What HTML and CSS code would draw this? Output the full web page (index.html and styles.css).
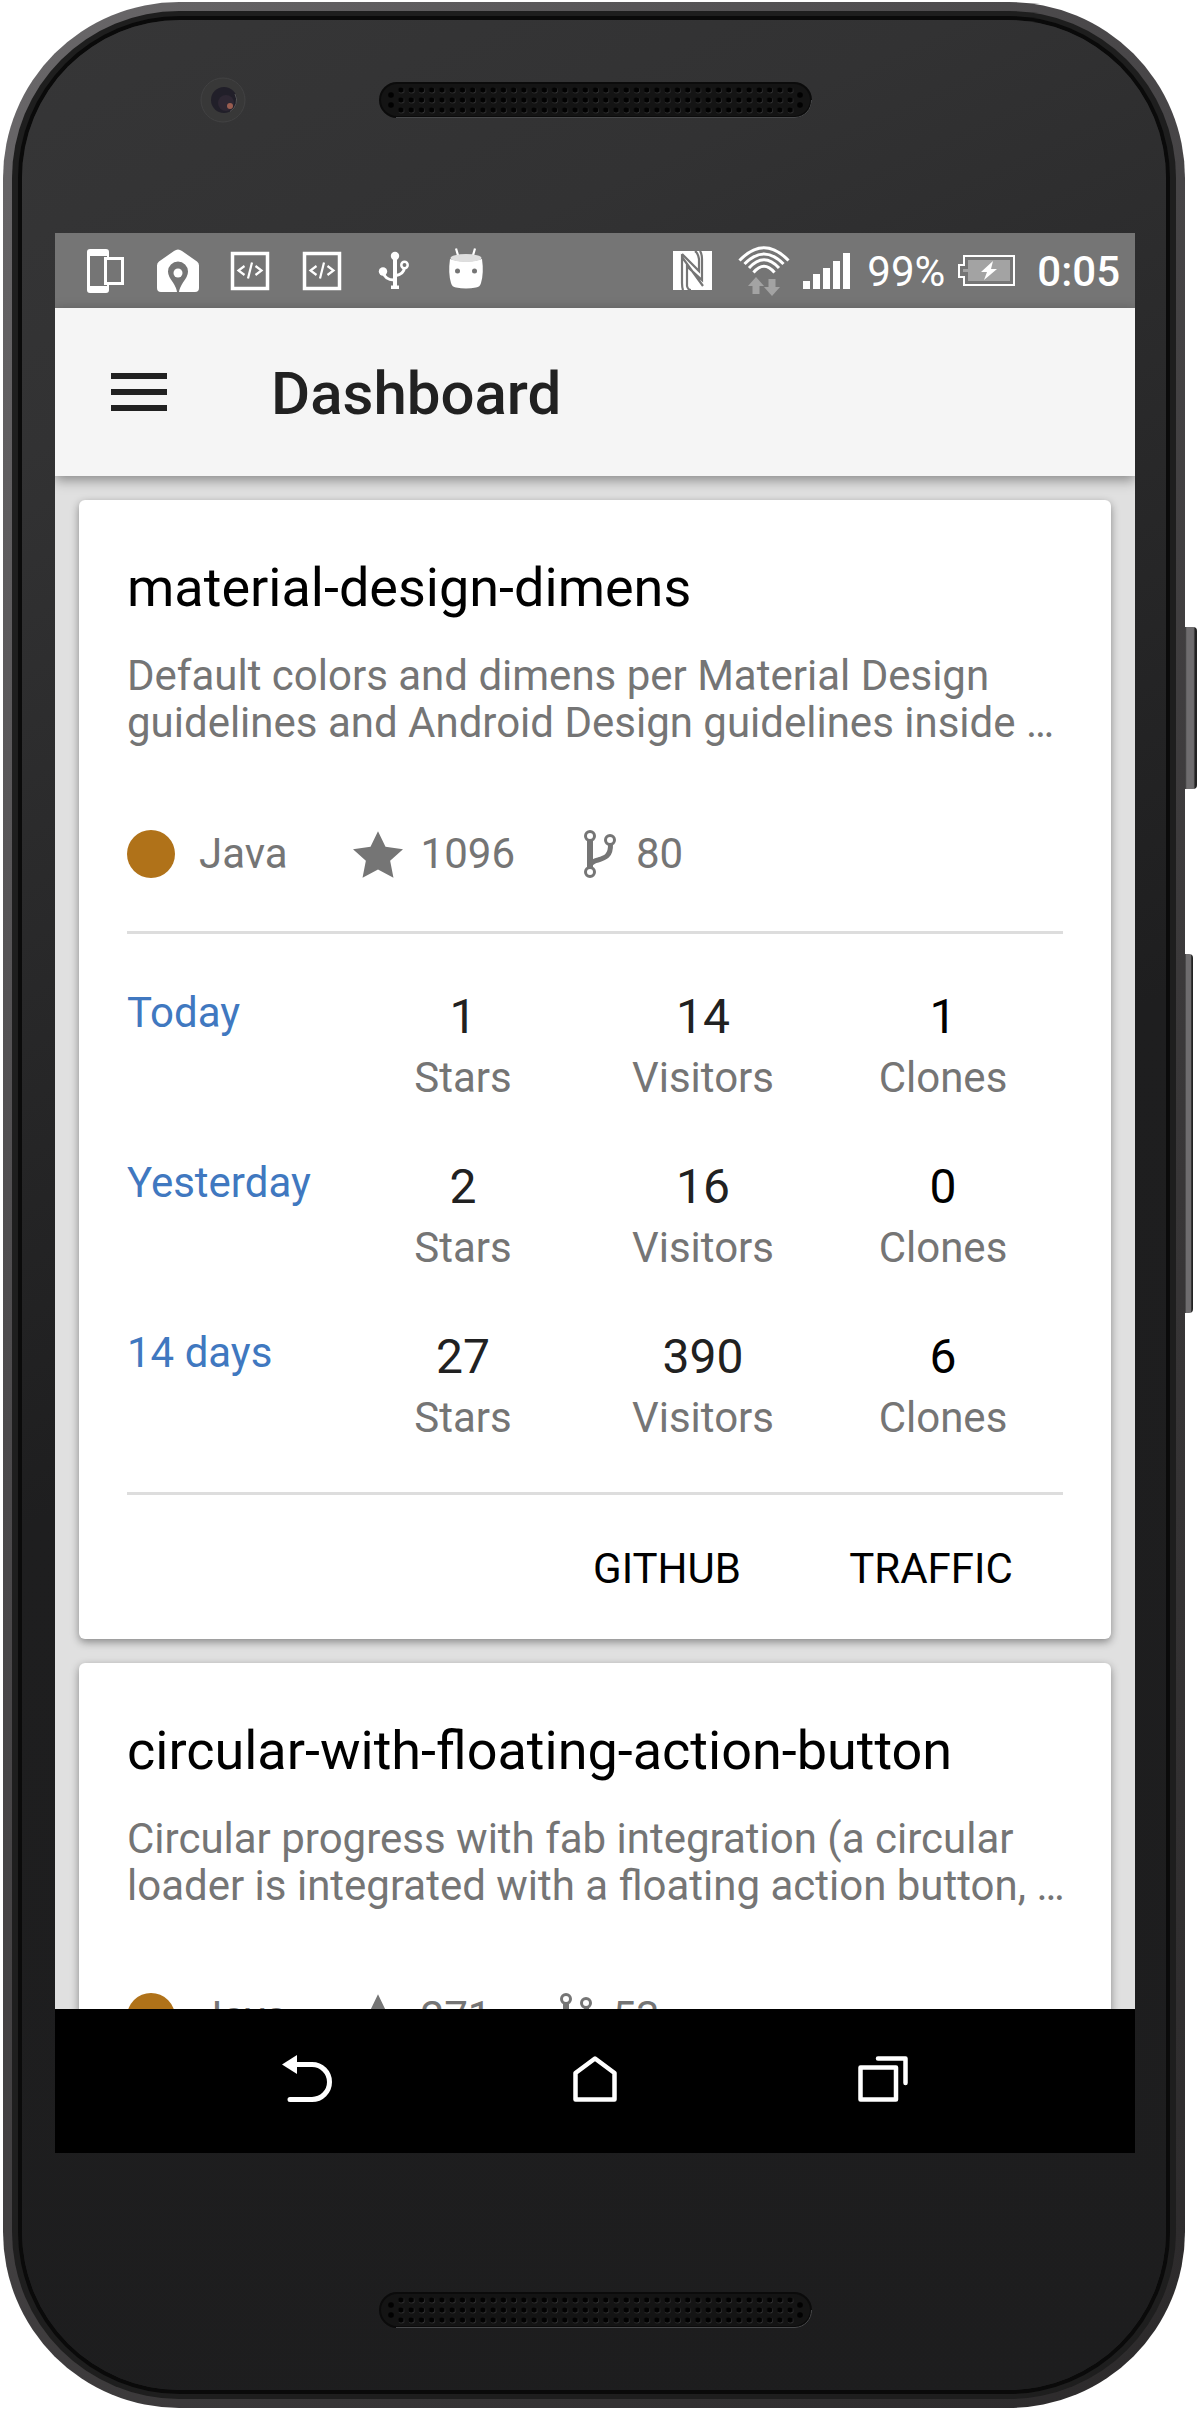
FILE: index.html
```html
<!DOCTYPE html>
<html lang="en">
<head>
<meta charset="utf-8">
<meta name="viewport" content="width=device-width, initial-scale=1">
<title>Dashboard</title>
<link rel="stylesheet" href="styles.css">
</head>
<body>
<svg class="defs" width="0" height="0" aria-hidden="true">
  <defs>
    <pattern id="holes" x="17" y="3" width="10.24" height="10" patternUnits="userSpaceOnUse">
      <circle cx="5.4" cy="5.4" r="2.9" fill="#3a3a3b"/>
      <circle cx="5" cy="5" r="2.8" fill="#020202"/>
    </pattern>
    <symbol id="grille" viewBox="0 0 433 36">
      <rect x="1" y="1" width="431" height="34" rx="17" fill="#141414" stroke="#0b0b0b" stroke-width="2"/>
      <path d="M17 35.5H416A17 17 0 0 0 432.5 18" fill="none" stroke="#48494b" stroke-width="1"/>
      <rect x="17" y="3" width="399" height="30" fill="url(#holes)"/>
      <g fill="#020202"><circle cx="12" cy="13" r="2.8"/><circle cx="12" cy="23" r="2.8"/><circle cx="421" cy="13" r="2.8"/><circle cx="421" cy="23" r="2.8"/></g>
    </symbol>
    <symbol id="star" viewBox="0 1 14 13">
      <path d="M14 6l-4.9-.64L7 1 4.9 5.36 0 6l3.6 3.26L2.67 14 7 11.67 11.33 14l-.93-4.74z" fill="currentColor"/>
    </symbol>
    <symbol id="fork" viewBox="-4 0 38 48">
      <g fill="none" stroke="currentColor">
        <g stroke-width="3"><circle cx="6" cy="6" r="4.5"/><circle cx="26" cy="10" r="4.5"/><circle cx="6" cy="42" r="4.5"/></g>
        <path d="M6 11V37" stroke-width="6"/>
        <path d="M26.5 14C27 26 21 28 14 30C10 31 8 32 7 34" stroke-width="5"/>
      </g>
    </symbol>
    <symbol id="code" viewBox="0 0 48 48">
      <path d="M6.5 6.5h35v35h-35z" fill="none" stroke="currentColor" stroke-width="3.5"/>
      <path d="M18.5 19L12.5 23.5L18.5 28M29.5 19L35.5 23.5L29.5 28M26 15.5L22 31.5" fill="none" stroke="currentColor" stroke-width="2.2"/>
    </symbol>
  </defs>
</svg>

<div class="phone">
  <span class="side-key power"></span>
  <span class="side-key volume"></span>
  <div class="bezel">
    <div class="face">
      <div class="forehead">
        <svg class="camera" viewBox="0 0 46 46" aria-hidden="true">
          <circle cx="23" cy="23" r="22" fill="#383838" stroke="#424243"/>
          <circle cx="24" cy="23" r="13" fill="#211f29"/>
          <circle cx="26" cy="26" r="8" fill="#2e2733"/>
          <circle cx="30" cy="29" r="3" fill="#9a5d50"/>
          <path d="M35 17A13 13 0 0 1 30 34.5" fill="none" stroke="#555" stroke-width="1"/>
        </svg>
        <svg class="grille" aria-hidden="true"><use href="#grille"/></svg>
      </div>

      <div class="screen">
        <div class="status">
          <div class="status-left">
            <svg class="tray" viewBox="0 0 48 48" aria-hidden="true">
              <path fill="currentColor" fill-rule="evenodd" d="M8 2H24a3 3 0 0 1 3 3V10H25V9H8V39H25V38H27V43a3 3 0 0 1-3 3H8a3 3 0 0 1-3-3V5a3 3 0 0 1 3-3z"/>
              <path fill="none" stroke="currentColor" stroke-width="3" d="M23.5 11.5h17v25h-17z"/>
            </svg>
            <svg class="tray" viewBox="0 0 48 48" aria-hidden="true">
              <path fill="currentColor" fill-rule="evenodd" d="M24 2.5q2 0 4 1.5L43 14.5Q45 16 45 18.5V41q0 4-4 4H25Q25.5 41 29 35.5Q34 29 34 24.5a10 10 0 0 0-20 0Q14 29 19 35.5Q22.500 41 23 45H7q-4 0-4-4V18.5Q3 16 5 14.5L20 4q2-1.5 4-1.500z"/>
              <circle cx="24" cy="26" r="4.5" fill="currentColor"/>
            </svg>
            <svg class="tray" aria-hidden="true"><use href="#code"/></svg>
            <svg class="tray" aria-hidden="true"><use href="#code"/></svg>
            <svg class="tray" viewBox="0 0 48 48" aria-hidden="true">
              <g fill="none" stroke="currentColor" stroke-width="3">
                <path d="M25 8V40" stroke-width="4"/>
                <path d="M13 25Q15 33 24 33M34.5 20Q34 27 26 28.5"/>
                <circle cx="34.5" cy="18" r="3.2" stroke-width="2.5"/>
              </g>
              <g fill="currentColor"><circle cx="25" cy="9" r="4.2"/><circle cx="13" cy="24.5" r="4.2"/><path d="M21 38.5h8V42h-8z"/></g>
            </svg>
            <svg class="tray" viewBox="0 0 48 48" aria-hidden="true">
              <path d="M14 1.500L16.5 10M33 1.5L30.5 10" stroke="currentColor" stroke-width="2.2"/>
              <path fill="currentColor" d="M8 12Q24 17 40 12Q42 26 39 36Q38 40 34 40.5Q24 42.5 14 40.5Q10 40 9 36Q6 26 8 12z"/>
              <ellipse cx="24" cy="11" rx="15.5" ry="4" fill="#dedede"/>
              <circle cx="15.5" cy="24" r="2.5" fill="#757575"/><circle cx="32.5" cy="24" r="2.5" fill="#757575"/>
            </svg>
          </div>
          <div class="status-right">
            <svg class="nfc" viewBox="0 0 39 39" aria-hidden="true">
              <path fill="currentColor" d="M0 0H39V39H0z"/>
              <path fill="none" stroke="#757575" stroke-width="2.2" d="M27 0Q29 3 29 8V29L14 15.5V35Q15 39 18 39M10 39Q9 36 9 32V6L30 35M9 3L26 20V8Q25 2 22 0"/>
            </svg>
            <svg class="wifi" viewBox="0 0 52 50" aria-hidden="true">
              <g fill="none" stroke="currentColor" stroke-width="3">
                <path d="M1.5 14.5Q26-11 50.5 14.5M6.5 18Q26-2 45.5 18M11 22Q26 5.500 41 22M15.5 26.5Q26 14 36.5 26.5"/>
              </g>
              <path fill="#a3a3a3" d="M18 31L26 40H21.5V48H14.5V40H10zM34 50L42 41H37.5V33H30.5V41H26z"/>
            </svg>
            <svg class="signal" viewBox="0 0 47 36" aria-hidden="true">
              <path fill="currentColor" d="M0 28h7v8H0zM10 21h7v15h-7zM20 15h7v21h-7zM30 8h7v28h-7zM40 0h7v36h-7z"/>
            </svg>
            <span class="percent">99%</span>
            <svg class="battery" viewBox="0 0 57 31" aria-hidden="true">
              <path fill="#a3a3a3" d="M5 14h5V5H52V26H10V17H5z"/>
              <path fill="none" stroke="currentColor" stroke-width="2" d="M6 1H56V30H6V22H1V10H6z"/>
              <path fill="currentColor" d="M35 6L23 17H29L26 25L39 14H33z"/>
            </svg>
            <span class="clock">0:05</span>
          </div>
        </div>

        <header class="appbar">
          <button class="menu" type="button" aria-label="Open menu"><span></span><span></span><span></span></button>
          <h1>Dashboard</h1>
        </header>

        <main class="feed">
          <article class="card">
            <h2>material-design-dimens</h2>
            <p class="about">Default colors and dimens per Material Design<br>guidelines and Android Design guidelines inside …</p>
            <div class="meta">
              <span class="lang"><i class="dot"></i>Java</span>
              <span class="count"><svg class="star" aria-hidden="true"><use href="#star"/></svg>1096</span>
              <span class="count"><svg class="fork" aria-hidden="true"><use href="#fork"/></svg>80</span>
            </div>
            <table class="stats">
              <tr><th scope="row">Today</th><td><b>1</b>Stars</td><td><b>14</b>Visitors</td><td class="clones"><b>1</b>Clones</td></tr>
              <tr><th scope="row">Yesterday</th><td><b>2</b>Stars</td><td><b>16</b>Visitors</td><td class="clones"><b>0</b>Clones</td></tr>
              <tr><th scope="row">14 days</th><td><b>27</b>Stars</td><td><b>390</b>Visitors</td><td class="clones"><b>6</b>Clones</td></tr>
            </table>
            <div class="actions">
              <button type="button">GITHUB</button>
              <button type="button">TRAFFIC</button>
            </div>
          </article>

          <article class="card">
            <h2>circular-with-floating-action-button</h2>
            <p class="about">Circular progress with fab integration (a circular<br>loader is integrated with a floating action button, …</p>
            <div class="meta">
              <span class="lang"><i class="dot"></i>Java</span>
              <span class="count"><svg class="star" aria-hidden="true"><use href="#star"/></svg>271</span>
              <span class="count"><svg class="fork" aria-hidden="true"><use href="#fork"/></svg>53</span>
            </div>
          </article>
        </main>

        <nav class="navbar">
          <button type="button" aria-label="Back">
            <svg viewBox="0 0 52 48" aria-hidden="true"><path d="M10 9.5H31A17.5 17.5 0 0 1 31 44.5H9" fill="none" stroke="currentColor" stroke-width="5" stroke-linecap="round"/><path d="M1 9.5L16 0V19z" fill="currentColor"/></svg>
          </button>
          <button type="button" aria-label="Home">
            <svg viewBox="0 0 52 48" aria-hidden="true"><path d="M6.5 18L26 3.5L45.5 18V44.5H6.5z" fill="none" stroke="currentColor" stroke-width="4.5" stroke-linejoin="round"/></svg>
          </button>
          <button type="button" aria-label="Recent apps">
            <svg viewBox="0 0 52 48" aria-hidden="true"><path d="M3.5 12.5H39V44.5H3.5z" fill="none" stroke="currentColor" stroke-width="4.5" stroke-linejoin="round"/><path d="M21 3.5H48.5V28" fill="none" stroke="currentColor" stroke-width="4.5" stroke-linecap="round" stroke-linejoin="round"/></svg>
          </button>
        </nav>
      </div>

      <div class="chin">
        <svg class="grille" aria-hidden="true"><use href="#grille"/></svg>
      </div>
    </div>
  </div>
</div>
</body>
</html>
```
FILE: styles.css
```css
* {
  box-sizing: border-box;
}

body {
  margin: 0;
  padding: 2px 13px 1px 3px;
  height: 100vh;
  min-height: 1400px;
  background: #fff;
  font-family: Roboto, "Liberation Sans", sans-serif;
}

.defs {
  position: absolute;
}

h1,
h2,
p {
  margin: 0;
}

button {
  margin: 0;
  padding: 0;
  border: 0;
  background: none;
  font: inherit;
  color: inherit;
  cursor: pointer;
}

/* Handset */

.phone {
  position: relative;
  height: 100%;
  padding: 9px;
  border-radius: 176px;
  background: linear-gradient(125deg, #6a686a 0%, #4c4a4c 35%, #383637 70%, #2c2a2b 100%);
}

.bezel {
  height: 100%;
  padding: 9px 10px;
  border-radius: 167px;
  background: #1e1e1e;
}

.face {
  display: flex;
  flex-direction: column;
  height: 100%;
  padding: 0 31px 0 33px;
  border-radius: 158px;
  background: linear-gradient(155deg, #363637 0%, #323233 15%, #1e1e1f 52%, #1d1d1e 100%);
  box-shadow: 0 0 0 4px #0a0a0a;
}

.side-key {
  position: absolute;
  left: 100%;
  border-radius: 0 4px 4px 0;
  background: linear-gradient(90deg, #333 0%, #6e6c6e 15%, #6e6c6e 70%, #222 85%);
}

.power {
  top: 625px;
  width: 12px;
  height: 162px;
}

.volume {
  top: 952px;
  width: 8px;
  height: 359px;
}

.forehead {
  display: grid;
  grid-template-columns: 1fr auto 1fr;
  align-items: center;
  height: 160px;
  margin-bottom: 53px;
}

.camera {
  justify-self: center;
  width: 46px;
  height: 46px;
  margin-left: 12px;
}

.grille {
  width: 433px;
  height: 36px;
}

.chin {
  display: flex;
  justify-content: center;
  padding: 139px 0 62px;
}

/* Screen */

.screen {
  display: flex;
  flex: 1;
  flex-direction: column;
  min-height: 0;
  overflow: hidden;
  background: #e0e0e0;
}

.status {
  display: flex;
  flex: none;
  align-items: center;
  justify-content: space-between;
  height: 75px;
  padding: 0 15px 0 27px;
  background: #757575;
  color: #fff;
}

.status-left,
.status-right {
  display: flex;
  align-items: center;
}

.status-left {
  gap: 24px;
}

.tray {
  width: 48px;
  height: 48px;
}

.nfc {
  width: 39px;
  height: 39px;
  margin-right: 26px;
}

.wifi {
  width: 52px;
  height: 50px;
  margin-right: 13px;
}

.signal {
  width: 47px;
  height: 36px;
  margin-right: 17px;
}

.battery {
  width: 57px;
  height: 31px;
  margin: 0 22px 0 13px;
}

.percent,
.clock {
  padding-top: 2px;
  font-size: 42px;
  line-height: 48px;
}

.clock {
  font-weight: 500;
}

.appbar {
  position: relative;
  z-index: 1;
  display: flex;
  flex: none;
  align-items: center;
  gap: 104px;
  height: 168px;
  padding: 0 56px;
  background: #f5f5f5;
  box-shadow: 0 4px 12px rgba(0, 0, 0, 0.4);
}

.menu {
  display: grid;
  gap: 10px;
  width: 56px;
}

.menu span {
  height: 6px;
  background: #212121;
}

h1 {
  padding-top: 4px;
  color: #212121;
  font-size: 60px;
  font-weight: 500;
  line-height: 70px;
}

.feed {
  display: flex;
  flex: 1;
  flex-direction: column;
  gap: 24px;
  min-height: 0;
  padding: 24px;
  overflow: hidden;
}

.card {
  flex: none;
  padding: 56px 48px 0;
  border-radius: 6px;
  background: #fff;
  box-shadow: 0 3px 8px rgba(0, 0, 0, 0.4);
}

h2 {
  color: #000;
  font-size: 54px;
  font-weight: 400;
  line-height: 64px;
}

.about {
  margin-top: 32px;
  color: #757575;
  font-size: 42px;
  line-height: 47px;
  white-space: nowrap;
}

.meta {
  display: flex;
  gap: 65px;
  padding: 82px 0 51px;
  color: #757575;
  font-size: 42px;
  line-height: 52px;
}

.lang,
.count {
  display: flex;
  align-items: center;
}

.lang {
  gap: 24px;
}

.count {
  gap: 18px;
}

.dot {
  width: 48px;
  height: 48px;
  border-radius: 50%;
  background: #b07219;
}

.star {
  width: 50px;
  height: 47px;
}

.fork {
  width: 38px;
  height: 48px;
}

.stats {
  width: 100%;
  padding-bottom: 48px;
  border: solid #ddd;
  border-width: 3px 0;
  border-spacing: 0;
  table-layout: fixed;
  color: #757575;
  font-size: 42px;
  line-height: 49px;
}

.stats th,
.stats td {
  padding: 54px 0 2px;
  vertical-align: top;
  text-align: center;
}

.stats th {
  width: 216px;
  color: #4078c0;
  font-weight: 400;
  text-align: left;
}

.stats b {
  display: block;
  margin-bottom: 7px;
  color: #212121;
  font-size: 48px;
  font-weight: 400;
  line-height: 58px;
}

.stats .clones b {
  color: #000;
}

.actions {
  display: flex;
  justify-content: flex-end;
}

.actions button {
  width: 264px;
  height: 144px;
  padding-top: 3px;
  color: #000;
  font-size: 42px;
  line-height: 50px;
}

.navbar {
  display: grid;
  flex: none;
  grid-template-columns: repeat(3, 1fr);
  height: 144px;
  padding: 0 108px;
  background: #000;
  color: #fff;
}

.navbar svg {
  width: 52px;
  height: 48px;
}
```
